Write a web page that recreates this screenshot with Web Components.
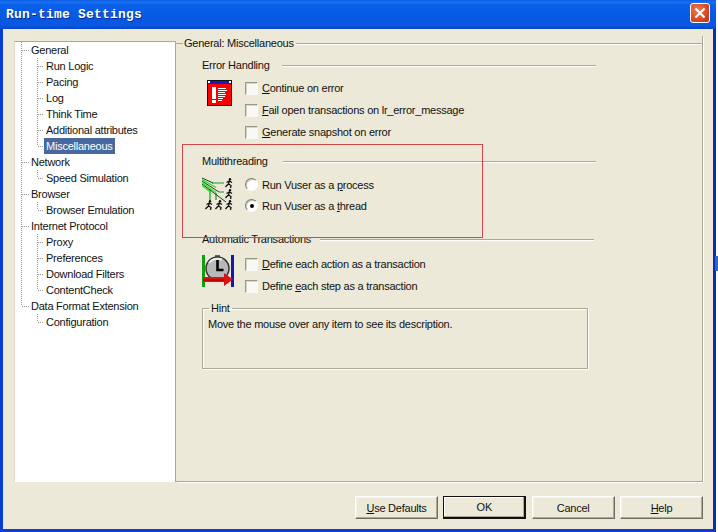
<!DOCTYPE html>
<html>
<head>
<meta charset="utf-8">
<title>Run-time Settings</title>
<style>
  html, body { margin: 0; padding: 0; background: #fff; overflow: hidden; }
  body { font: 11px "Liberation Sans", sans-serif; letter-spacing: -.24px; color: #111; width: 718px; height: 532px; position: relative; }
  .edge { position: absolute; left: 715px; top: 256px; width: 3px; height: 15px; background: #3a5fd0; }
</style>
</head>
<body>
<xp-window heading="Run-time Settings">
  <tree-view slot="tree">
    <tree-node label="General">
      <tree-leaf>Run Logic</tree-leaf>
      <tree-leaf>Pacing</tree-leaf>
      <tree-leaf>Log</tree-leaf>
      <tree-leaf>Think Time</tree-leaf>
      <tree-leaf>Additional attributes</tree-leaf>
      <tree-leaf selected>Miscellaneous</tree-leaf>
    </tree-node>
    <tree-node label="Network">
      <tree-leaf>Speed Simulation</tree-leaf>
    </tree-node>
    <tree-node label="Browser">
      <tree-leaf>Browser Emulation</tree-leaf>
    </tree-node>
    <tree-node label="Internet Protocol">
      <tree-leaf>Proxy</tree-leaf>
      <tree-leaf>Preferences</tree-leaf>
      <tree-leaf>Download Filters</tree-leaf>
      <tree-leaf>ContentCheck</tree-leaf>
    </tree-node>
    <tree-node label="Data Format Extension">
      <tree-leaf>Configuration</tree-leaf>
    </tree-node>
  </tree-view>

  <settings-panel slot="panel" heading="General: Miscellaneous">
    <settings-section heading="Error Handling" style="--top:8px;--rows:5px;--line:12px">
      <svg slot="icon" width="25" height="26" viewBox="0 0 25 26" style="margin:3px 0 0 5px">
        <rect x=".5" y=".5" width="24" height="25" fill="#f00" stroke="#111"/>
        <rect x="1" y="1" width="23" height="3" fill="#1818c8"/>
        <path d="M1 1h2v2H1zM22 1h2v2h-2z" fill="#fff"/>
        <path d="M5 7h4v12H5zM5 20h4v3H5z" fill="#fff"/>
        <path d="M11 8h8v1h-8zM11 10h9v1h-9zM11 12h7v1h-7zM11 14h8v1h-8zM11 16h7v1h-7zM11 18h5v1h-5zM11 20h4v1h-4z" fill="#fff"/>
      </svg>
      <option-row kind="check"><u>C</u>ontinue on error</option-row>
      <option-row kind="check"><u>F</u>ail open transactions on lr_error_message</option-row>
      <option-row kind="check"><u>G</u>enerate snapshot on error</option-row>
    </settings-section>

    <settings-section heading="Multithreading" style="--top:11px;--rows:6px;--line:15px;--row-h:21px">
      <svg slot="icon" width="32" height="34" viewBox="0 0 32 34" style="margin:2px 0 0 0">
        <g fill="none" stroke="#0fa00f" stroke-width="1.200">
          <path d="M8 13v11M14 17v7"/>
          <path d="M10 7h12M17 16h5"/>
        </g>
        <g fill="none" stroke="#0c4a10" stroke-width="1">
          <path d="M0 2l11 5M0 5l17 11M0 8l24 18"/>
        </g>
        <g fill="none" stroke="#28dc28" stroke-width="1.100">
          <path d="M0 3.500l14 8M0 6.500l14 10M0 9.500l9 7"/>
        </g>
        <defs>
          <g id="runner" fill="none" stroke="#111" stroke-width="1.300">
            <circle cx="5" cy="1.200" r="1.200" fill="#111" stroke="none"/>
            <path d="M4.500 2.500L3.500 6M1.500 4.500L4.500 3 7 4.500M3.500 6L6 7.500 5.500 10M3.500 6L1.800 7.500.5 9"/>
          </g>
        </defs>
        <use href="#runner" x="23" y="2"/>
        <use href="#runner" x="23" y="13"/>
        <use href="#runner" x="3" y="24"/>
        <use href="#runner" x="13" y="24"/>
        <use href="#runner" x="23" y="24"/>
      </svg>
      <option-row kind="radio">Run Vuser as a <u>p</u>rocess</option-row>
      <option-row kind="radio" checked>Run Vuser as a <u>t</u>hread</option-row>
    </settings-section>

    <settings-section heading="Automatic Transactions" style="--top:16px;--rows:7px;--line:9px;--width:392px">
      <svg slot="icon" width="33" height="33" viewBox="0 0 33 33" style="margin:1px 0 0 0">
        <rect x="0" y="1" width="3" height="32" fill="#12a012"/>
        <rect x="29" y="1" width="3" height="32" fill="#1515b0"/>
        <rect x="13" y="1" width="5" height="2" fill="#666"/>
        <circle cx="15.500" cy="14.500" r="11.500" fill="#b8b8b8" stroke="#333" stroke-width="1.500"/>
        <path d="M7 9a11 11 0 0 1 13-3.500" fill="none" stroke="#eee" stroke-width="2"/>
        <path d="M15.500 6v10h6" fill="none" stroke="#000" stroke-width="2.600"/>
        <path d="M1 23h21v-4l9 6.500-9 6.500v-4H1z" fill="#e01010"/>
        <path d="M1 26h21" stroke="#900" stroke-width="1"/>
      </svg>
      <option-row kind="check"><u>D</u>efine each action as a transaction</option-row>
      <option-row kind="check">Define <u>e</u>ach step as a transaction</option-row>
    </settings-section>

    <hint-box heading="Hint">Move the mouse over any item to see its description.</hint-box>
  </settings-panel>

  <xp-button slot="actions"><u>U</u>se Defaults</xp-button>
  <xp-button slot="actions" default>OK</xp-button>
  <xp-button slot="actions">Cancel</xp-button>
  <xp-button slot="actions"><u>H</u>elp</xp-button>
</xp-window>
<markup-box></markup-box>
<div class="edge"></div>

<script>
const DOTS_V = 'repeating-linear-gradient(180deg,#9a9a9a 0 1px,transparent 1px 2px)';
const DOTS_H = 'repeating-linear-gradient(90deg,#9a9a9a 0 1px,transparent 1px 2px)';

class BaseEl extends HTMLElement {
    constructor(html) {
        super();
        this.attachShadow({ mode: 'open' });
        this.shadowRoot.innerHTML = html;
    }
}

class XpWindow extends BaseEl {
    constructor() {
        super(`
        <style>
            :host{display:flex;flex-direction:column;width:716px;height:532px;box-sizing:border-box;
                border:solid #0a3ed6;border-width:0 3px 3px 3px;border-right-color:#0a2db0;background:#ece9d8;}
            .title{height:29px;margin:0 -3px;display:flex;align-items:center;justify-content:space-between;
                padding:0 6px 0 6px;box-sizing:border-box;
                background:linear-gradient(180deg,#0a5ae2 0,#1a72f2 2px,#0a5fe8 5px,#0757e2 20px,#0a58e4 25px,#0546c8 29px);}
            .title span{font:bold 13px "Liberation Mono",monospace;letter-spacing:.2px;color:#fff;text-shadow:1px 1px 0 #0a2a90;margin-top:-1px;}
            .close{width:20px;height:20px;box-sizing:border-box;margin-top:-3px;border:1px solid #fff;border-radius:3px;
                background:radial-gradient(circle at 35% 35%,#ee7a50,#d5421c 70%,#b8300f);display:flex;align-items:center;justify-content:center;}
            .main{display:flex;align-items:flex-end;padding:7px 10px 0 11px;}
            .foot{display:flex;justify-content:space-between;width:348px;margin:14px 10px 0 auto;}
        </style>
        <div class="title"><span id="t"></span>
            <div class="close"><svg width="12" height="12" viewBox="0 0 12 12"><path d="M1.500 1.500l9 9M10.500 1.500l-9 9" stroke="#fff" stroke-width="2.200"/></svg></div>
        </div>
        <div class="main"><slot name="tree"></slot><slot name="panel"></slot></div>
        <div class="foot"><slot name="actions"></slot></div>`);
    }
    connectedCallback() {
        this.shadowRoot.querySelector('#t').textContent = this.getAttribute('heading');
    }
}

class TreeView extends BaseEl {
    constructor() {
        super(`<style>
            :host{display:block;width:162px;height:441px;box-sizing:border-box;background:#fff;
                border-top:1px solid #aca899;border-left:1px solid #e8d8d0;border-right:1px solid #aca899;}
        </style><slot></slot>`);
    }
}

class TreeNode extends BaseEl {
    constructor() {
        super(`<style>
            :host{display:block;background:${DOTS_V} 6px 0/1px 100% no-repeat;}
            :host(:last-of-type){background-size:1px 8px;}
            .row{height:16px;line-height:16px;padding-left:16px;background:${DOTS_H} 7px 8px/7px 1px no-repeat;white-space:nowrap;}
        </style><div class="row" id="l"></div><slot></slot>`);
    }
    connectedCallback() {
        this.shadowRoot.querySelector('#l').textContent = this.getAttribute('label');
    }
}

class TreeLeaf extends BaseEl {
    constructor() {
        super(`<style>
            :host{display:block;height:16px;line-height:16px;padding-left:29px;white-space:nowrap;
                background:${DOTS_V} 22px 0/1px 100% no-repeat,${DOTS_H} 23px 8px/6px 1px no-repeat;}
            :host(:last-of-type){background-size:1px 8px,6px 1px;}
            span{display:inline-block;padding:0 2px;}
            :host([selected]) span{background:#47699f;color:#fff;}
        </style><span><slot></slot></span>`);
    }
}

class SettingsPanel extends BaseEl {
    constructor() {
        super(`<style>
            :host{display:block;width:527px;height:446px;box-sizing:border-box;padding:0;
                border-right:1px solid #aca899;border-bottom:1px solid #aca899;
                box-shadow:1px 1px 0 #fff;}
            .head{display:flex;align-items:center;height:14px;}
            .head::before{content:"";width:7px;height:1px;background:#aca899;margin-right:1px;}
            .head::after{content:"";flex:1;height:1px;background:#aca899;margin-left:2px;box-shadow:0 1px 0 #fff;}
            .body{padding-left:26px;}
        </style>
        <div class="head"><span id="h"></span></div>
        <div class="body"><slot></slot></div>`);
    }
    connectedCallback() {
        this.shadowRoot.querySelector('#h').textContent = this.getAttribute('heading');
    }
}

class SettingsSection extends BaseEl {
    constructor() {
        super(`<style>
            :host{display:block;width:var(--width,394px);margin-top:var(--top,0);}
            .head{display:flex;align-items:center;height:14px;}
            .head::after{content:"";flex:1;height:1px;background:#aca899;margin-left:var(--line,10px);box-shadow:0 1px 0 #fff;}
            .grid{display:grid;grid-template-columns:43px 1fr;margin-top:var(--rows,5px);}
            .icon{display:block;line-height:0;}
        </style>
        <div class="head"><span id="h"></span></div>
        <div class="grid"><div class="icon"><slot name="icon"></slot></div><div><slot></slot></div></div>`);
    }
    connectedCallback() {
        this.shadowRoot.querySelector('#h').textContent = this.getAttribute('heading');
    }
}

class OptionRow extends BaseEl {
    constructor() {
        super(`<style>
            :host{display:flex;align-items:center;height:var(--row-h,22px);white-space:nowrap;}
            .box{width:13px;height:13px;box-sizing:border-box;margin-right:4px;flex:none;background:#f8f8f4;
                border:1px solid;border-color:#9a988a #f8f8f4 #f8f8f4 #9a988a;box-shadow:inset 1px 1px 0 #d8d5c4;}
            :host([kind=radio]) .box{border-radius:50%;display:flex;align-items:center;justify-content:center;
                border-color:#807e70 #fff #fff #807e70;background:#fff;box-shadow:inset 1px 1px 0 #c8c5b4;}
            :host([checked]) .box::after{content:"";width:4px;height:4px;border-radius:50%;background:#000;}
        </style><div class="box"></div><span><slot></slot></span>`);
    }
}

class HintBox extends BaseEl {
    constructor() {
        super(`<style>
            :host{display:block;width:386px;margin-top:4px;}
            fieldset{margin:0;padding:3px 5px 0 5px;height:68px;box-sizing:border-box;border:1px solid #aca899;box-shadow:1px 1px 0 #fff,inset 1px 1px 0 #fff;}
            legend{margin-left:1px;padding:0 2px;line-height:14px;}
        </style>
        <fieldset><legend id="h"></legend><slot></slot></fieldset>`);
    }
    connectedCallback() {
        this.shadowRoot.querySelector('#h').textContent = this.getAttribute('heading');
    }
}

class XpButton extends BaseEl {
    constructor() {
        super(`<style>
            :host{display:flex;align-items:center;justify-content:center;width:83px;height:23px;box-sizing:border-box;
                background:#ece9d8;border:1px solid;border-color:#fff #716f64 #716f64 #fff;
                box-shadow:inset -1px -1px 0 #aca899,inset 1px 1px 0 #f6f4ea;}
            :host([default]){border:2px solid;border-color:#111;border-width:1px 2px 2px 1px;box-shadow:inset -1px -1px 0 #aca899,inset 1px 1px 0 #fff;}
        </style><span><slot></slot></span>`);
    }
}

// hand-drawn annotation sitting on top of the screenshot
class MarkupBox extends BaseEl {
    constructor() {
        super(`<style>
            :host{position:absolute;left:182px;top:144px;width:301px;height:94px;box-sizing:border-box;
                border:1px solid #d2474a;pointer-events:none;}
        </style>`);
    }
}

customElements.define('xp-window', XpWindow);
customElements.define('tree-view', TreeView);
customElements.define('tree-node', TreeNode);
customElements.define('tree-leaf', TreeLeaf);
customElements.define('settings-panel', SettingsPanel);
customElements.define('settings-section', SettingsSection);
customElements.define('option-row', OptionRow);
customElements.define('hint-box', HintBox);
customElements.define('xp-button', XpButton);
customElements.define('markup-box', MarkupBox);
</script>
</body>
</html>
